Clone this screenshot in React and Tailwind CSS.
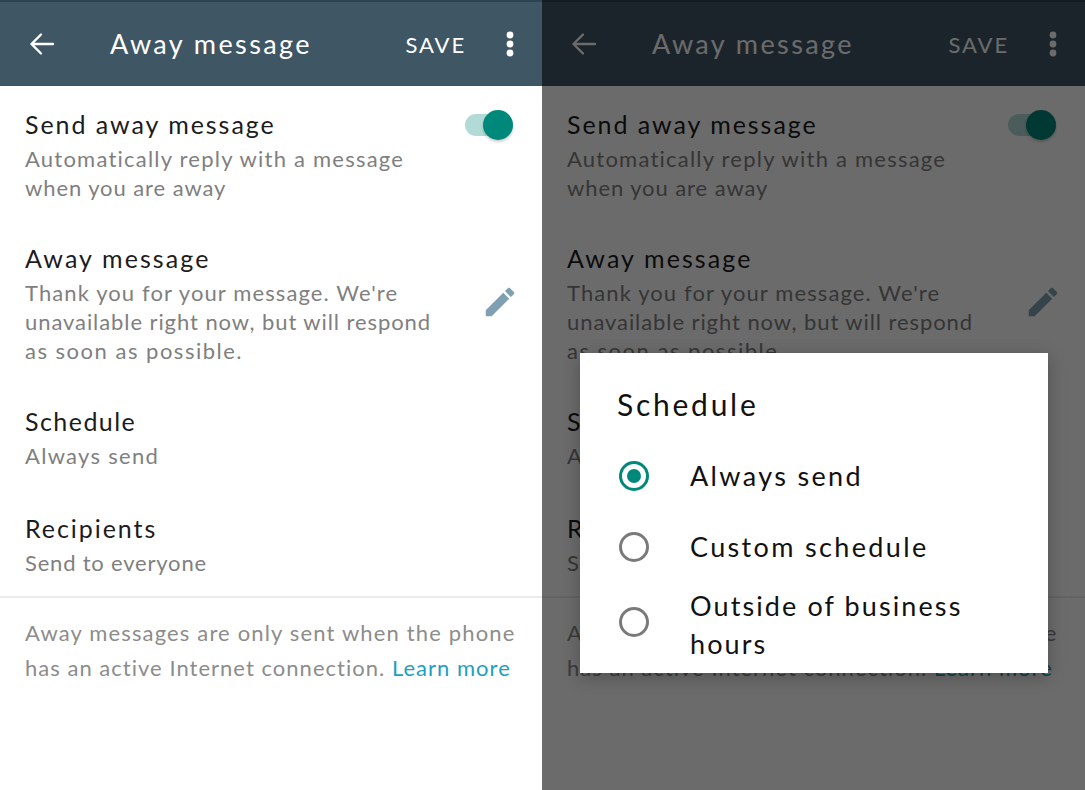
function BackIcon({ className }) {
    return (
        <svg viewBox="0 0 26 24" className={className} fill="none" stroke="currentColor" strokeWidth="2.4" strokeLinecap="round" strokeLinejoin="round">
            <path d="M24 12H2.5M12 2.5L2.5 12l9.5 9.5" />
        </svg>
    );
}

function DotsIcon({ className }) {
    return (
        <svg viewBox="0 0 8 26" className={className} fill="currentColor">
            <circle cx="4" cy="4" r="3.4" />
            <circle cx="4" cy="13" r="3.4" />
            <circle cx="4" cy="22" r="3.4" />
        </svg>
    );
}

function PencilIcon({ className }) {
    return (
        <svg viewBox="0 0 24 24" className={className} fill="currentColor">
            <path d="M3 17.25V21h3.75L17.81 9.94l-3.75-3.75L3 17.25zM20.71 7.04c.39-.39.39-1.02 0-1.41l-2.34-2.34c-.39-.39-1.02-.39-1.41 0l-1.83 1.83 3.75 3.75 1.83-1.83z" />
        </svg>
    );
}

function Row({ title, titleClass = "tracking-[1.95px]", lines, className }) {
    return (
        <div className={className}>
            <div className={`text-[25px] leading-[39px] text-[#1c1c1c] ${titleClass}`}>{title}</div>
            {lines.map(([line, spacing]) => (
                <div key={line} className={`whitespace-nowrap text-[22px] leading-[29px] text-[#7f7f7f] ${spacing}`}>{line}</div>
            ))}
        </div>
    );
}

function Settings() {
    return (
        <div className="h-full bg-white">
            <header className="flex h-[86px] items-center border-t-2 border-[#2f4453] bg-[#3f5665] pl-[29px] pr-[28px] text-white">
                <BackIcon className="h-[24px] w-[26px]" />
                <h1 className="ml-[55px] text-[27px] tracking-[2.4px]">Away message</h1>
                <span className="ml-auto text-[22px] tracking-[1.9px]">SAVE</span>
                <DotsIcon className="ml-[40px] h-[26px] w-[8px]" />
            </header>
            <div className="relative px-[25px]">
                <Row
                    className="pt-[19px]"
                    title="Send away message"
                    lines={[
                        ["Automatically reply with a message", "tracking-[1.22px]"],
                        ["when you are away", "tracking-[0.92px]"],
                    ]}
                />
                <span className="absolute right-[29px] top-[24px] flex items-center">
                    <span className="h-[22px] w-[48px] rounded-full bg-[#b2dbd8]"></span>
                    <span className="-ml-[30px] h-[30px] w-[30px] rounded-full bg-[#00897b] shadow-[0_2px_3px_rgba(0,0,0,0.2)]"></span>
                </span>
                <div className="relative">
                    <Row
                        className="pt-[37px]"
                        title="Away message"
                        titleClass="tracking-[2.1px]"
                        lines={[
                            ["Thank you for your message. We're", "tracking-[1.1px]"],
                            ["unavailable right now, but will respond", "tracking-[0.92px]"],
                            ["as soon as possible.", "tracking-[1.5px]"],
                        ]}
                    />
                    <PencilIcon className="absolute right-[-2px] top-[81px] h-[38px] w-[38px] text-[#7f9fb2]" />
                </div>
                <Row className="pt-[37px]" title="Schedule" titleClass="tracking-[1.45px]" lines={[["Always send", "tracking-[1.3px]"]]} />
                <Row className="pt-[39px]" title="Recipients" lines={[["Send to everyone", "tracking-[0.8px]"]]} />
            </div>
            <div className="mt-[19px] whitespace-nowrap border-t-2 border-[#ececec] px-[25px] pt-[17px] text-[22px] leading-[35px] text-[#8c8c8c]">
                <p className="tracking-[1.15px]">Away messages are only sent when the phone</p>
                <p className="tracking-[1.02px]">has an active Internet connection. <span className="text-[#1c9fc4]">Learn more</span></p>
            </div>
        </div>
    );
}

function Radio({ checked }) {
    return (
        <span className={`flex h-[30px] w-[30px] shrink-0 items-center justify-center rounded-full border-[3px] ${checked ? "border-[#00897b]" : "border-[#7a7a7a]"}`}>
            {checked && <span className="h-[14px] w-[14px] rounded-full bg-[#00897b]"></span>}
        </span>
    );
}

function ScheduleDialog() {
    return (
        <div className="absolute left-[38px] top-[353px] h-[320px] w-[468px] bg-white pl-[37px] text-[#111] shadow-[0_4px_16px_rgba(0,0,0,0.25)]">
            <h2 className="pt-[29px] text-[30px] leading-[44px] tracking-[2.75px]">Schedule</h2>
            <div className="mt-[35px] flex h-[30px] items-center gap-[41px] pl-[2px] text-[27px] tracking-[2.35px]">
                <Radio checked />
                <span>Always send</span>
            </div>
            <div className="mt-[41px] flex h-[30px] items-center gap-[41px] pl-[2px] text-[27px] tracking-[2.35px]">
                <Radio />
                <span>Custom schedule</span>
            </div>
            <div className="mt-[19px] flex items-center gap-[41px] pl-[2px] text-[27px] leading-[38px] tracking-[2.1px]">
                <Radio />
                <span className="pt-[6px]">Outside of business<br />hours</span>
            </div>
        </div>
    );
}

export default function App() {
    return (
        <div className="flex h-[790px] w-[1085px] overflow-hidden font-['Lato',sans-serif]">
            <div className="h-full w-[542px] shrink-0">
                <Settings />
            </div>
            <div className="relative h-full w-[543px] shrink-0">
                <Settings />
                <div className="absolute inset-0 bg-black/[0.58]"></div>
                <ScheduleDialog />
            </div>
        </div>
    );
}
